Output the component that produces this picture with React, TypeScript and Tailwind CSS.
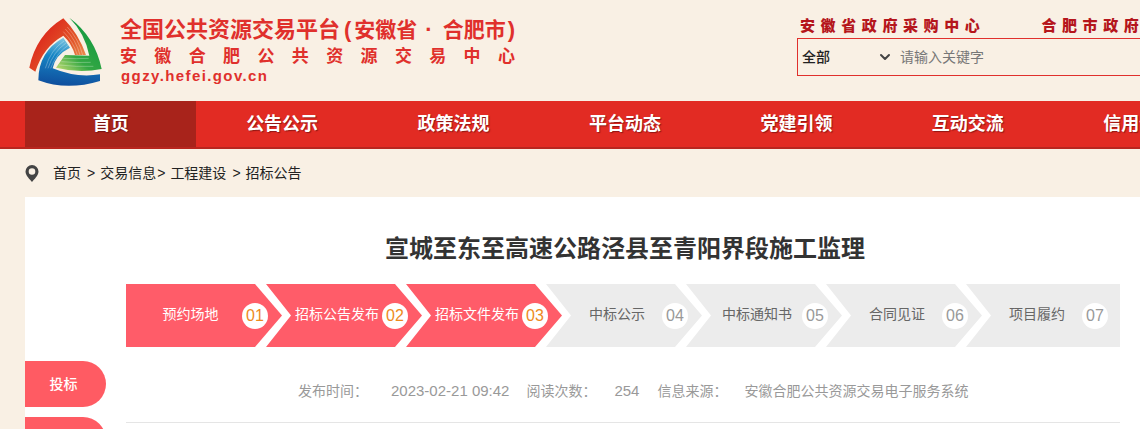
import { ChevronDown } from 'lucide-react'

const NAV = ['首页', '公告公示', '政策法规', '平台动态', '党建引领', '互动交流', '信用信息']

const STEPS = [
  { label: '预约场地', no: '01', done: true },
  { label: '招标公告发布', no: '02', done: true },
  { label: '招标文件发布', no: '03', done: true },
  { label: '中标公示', no: '04', done: false },
  { label: '中标通知书', no: '05', done: false },
  { label: '合同见证', no: '06', done: false },
  { label: '项目履约', no: '07', done: false },
]

function Logo() {
  return (
    <svg width="90" height="85" viewBox="0 0 270 255" className="shrink-0">
      <defs>
        <linearGradient id="redOrange" x1="0.2" y1="0.3" x2="1" y2="0.9">
          <stop offset="0" stopColor="#dd2a1c" />
          <stop offset="0.55" stopColor="#e2592a" />
          <stop offset="1" stopColor="#eda15c" />
        </linearGradient>
        <linearGradient id="greens" x1="0.7" y1="0.2" x2="0.1" y2="1">
          <stop offset="0" stopColor="#149a41" />
          <stop offset="0.6" stopColor="#35a843" />
          <stop offset="1" stopColor="#b4d66c" />
        </linearGradient>
        <linearGradient id="blues" x1="0.5" y1="1" x2="0.6" y2="0">
          <stop offset="0" stopColor="#0f4f9e" />
          <stop offset="0.6" stopColor="#1685c4" />
          <stop offset="1" stopColor="#86cbe3" />
        </linearGradient>
      </defs>
      <path d="M28 188 Q48 90 130 40 Q175 85 198 150 L165 150 Q155 115 130 92 Q70 125 46 200 Z" fill="url(#redOrange)" />
      <path d="M148 38 Q225 95 245 192 Q175 205 108 188 L135 150 L208 152 Q195 85 148 38 Z" fill="url(#greens)" />
      <path d="M130 98 L150 128 Q105 150 98 190 Q170 220 240 208 L240 228 Q140 258 55 226 Q55 140 130 98 Z" fill="url(#blues)" />
      {/* fine stripes on the inner ends of the three blades */}
      <g fill="none" stroke="#fff" strokeOpacity="0.55" strokeWidth="1.500">
        <path d="M136 72 Q168 105 180 150" />
        <path d="M130 80 Q160 110 172 150" />
        <path d="M142 66 Q176 102 188 150" />
        <path d="M130 160 Q170 162 206 160" />
        <path d="M124 170 Q170 174 212 172" />
        <path d="M117 180 Q170 186 220 184" />
        <path d="M132 108 Q92 134 76 190" />
        <path d="M138 114 Q100 140 84 190" />
        <path d="M144 121 Q108 146 92 190" />
      </g>
    </svg>
  )
}

function PinIcon() {
  return (
    <svg width="14" height="17" viewBox="0 0 14 17" className="shrink-0">
      <path
        fillRule="evenodd"
        d="M7 0a6.5 6.5 0 0 1 6.5 6.5C13.5 10.5 9 14.500 7 17 5 14.500 .5 10.500 .5 6.500A6.500 6.500 0 0 1 7 0zm0 3.200a3.300 3.300 0 1 0 0 6.600 3.300 3.300 0 0 0 0-6.600z"
        fill="#444"
      />
    </svg>
  )
}

export default function App() {
  return (
    <div className="h-[429px] w-[1140px] overflow-hidden bg-[#f9f0e4] font-['Liberation_Sans','Noto_Sans_CJK_SC',sans-serif]">
      <header className="flex h-[101px] w-[1250px] pl-[20px]">
        <div className="mt-[5px] h-[85px]">
          <Logo />
        </div>
        <div className="ml-[10px] w-[395px] pt-[15px] text-[#e0302c]">
          <div className="flex items-center whitespace-nowrap text-[22px] font-bold leading-[30px]">
            <span>全国公共资源交易平台</span>
            <span className="ml-[4px]">(</span>
            <span className="ml-[3px] text-[21px]">安徽省</span>
            <span className="ml-[8px]">·</span>
            <span className="ml-[10px] text-[21px]">合肥市</span>
            <span className="ml-[2px]">)</span>
          </div>
          <div className="flex justify-between text-[17px] font-bold leading-[24px]">
            {'安徽合肥公共资源交易中心'.split('').map((c, i) => (
              <span key={i}>{c}</span>
            ))}
          </div>
          <div className="-mt-[3px] pl-[1px] text-[15px] font-bold leading-[20px] tracking-[1.4px]">ggzy.hefei.gov.cn</div>
        </div>
        <div className="ml-[282px] w-[440px] pt-[14px]">
          <div className="flex h-[24px] items-center whitespace-nowrap pl-[3px] text-[15px] font-black leading-[22px] tracking-[5.6px] text-[#b5161c]">
            <span>安徽省政府采购中心</span>
            <span className="ml-[56px]">合肥市政府采购中心</span>
          </div>
          <div className="flex h-[38px] items-center border border-[#e0302c] pl-1">
            <span className="w-[75px] text-sm font-medium text-[#222]">全部</span>
            <ChevronDown className="h-4 w-4 text-[#444]" strokeWidth={3} />
            <input
              placeholder="请输入关键字"
              className="ml-[7px] flex-1 bg-transparent text-sm outline-none placeholder:text-[#777]"
            />
          </div>
        </div>
      </header>

      <nav className="h-[48px] w-[1250px] border-b-2 border-[#b8261f] bg-[#e22b23] pl-[25px]">
        <ul className="flex h-full w-[1200px]">
          {NAV.map((item, i) => (
            <li
              key={item}
              className={`flex flex-1 items-center justify-center text-lg font-bold text-white [text-shadow:1px_1px_1px_rgba(90,10,10,0.6)] ${i === 0 ? 'bg-[#a8231b]' : ''}`}
            >
              {item}
            </li>
          ))}
        </ul>
      </nav>

      <div className="flex h-[48px] items-center pl-[25px] text-sm text-[#222]">
        <PinIcon />
        <span className="ml-[14px]">首页</span>
        <span className="ml-[6px]">&gt;</span>
        <span className="ml-[5px]">交易信息</span>
        <span className="ml-[1px]">&gt;</span>
        <span className="ml-[5px]">工程建设</span>
        <span className="ml-[6px]">&gt;</span>
        <span className="ml-[5px]">招标公告</span>
      </div>

      <main className="ml-[25px] h-[300px] w-[1200px] bg-white">
        <h1 className="pt-[35px] text-center text-2xl font-bold leading-[34px] text-[#333]">
          宣城至东至高速公路泾县至青阳界段施工监理
        </h1>

        <div className="mt-[18px] flex">
          <aside className="w-[101px] shrink-0 pt-[77px]">
            <div className="flex h-[46px] w-[81px] items-center justify-center rounded-r-[23px] bg-[#ff5b63] pr-[4px] text-sm font-medium text-white">投标</div>
            <div className="mt-[10px] h-[46px] w-[81px] rounded-r-[23px] bg-[#ff5b63]" />
          </aside>

          <div className="w-[994px] shrink-0">
            <ol className="flex h-[63px]">
              {STEPS.map((s, i) => (
                <li
                  key={s.no}
                  className={`flex shrink-0 items-center text-sm ${s.done ? 'bg-[#ff5c69] text-white' : 'bg-[#ececec] text-[#666]'} ${
                    i === 0
                      ? 'w-[156px] [clip-path:polygon(0_0,129px_0,100%_50%,129px_100%,0_100%)]'
                      : i === STEPS.length - 1
                        ? '-ml-4 w-[154px] [clip-path:polygon(0_0,100%_0,100%_100%,0_100%,25px_50%)]'
                        : '-ml-4 w-[156px] [clip-path:polygon(0_0,129px_0,100%_50%,129px_100%,0_100%,25px_50%)]'
                  }`}
                >
                  <span className={`-mt-[3px] w-[116px] whitespace-nowrap text-center ${i === 0 ? 'pl-[13px]' : 'pl-[26px]'}`}>{s.label}</span>
                  <span className={`flex h-[26px] w-[26px] items-center justify-center rounded-full bg-white text-base ${s.done ? 'text-[#ee8a1d]' : 'text-[#999]'}`}>
                    {s.no}
                  </span>
                </li>
              ))}
            </ol>

            <div className="flex h-[76px] items-center whitespace-nowrap border-b border-[#e5e5e5] pl-[172px] pt-[13px] text-sm text-[#999]">
              <span>发布时间：</span>
              <span className="ml-[23px] text-[15px]">2023-02-21 09:42</span>
              <span className="ml-[17px]">阅读次数：</span>
              <span className="ml-[18px] text-[15px]">254</span>
              <span className="ml-[18px]">信息来源：</span>
              <span className="ml-[17px]">安徽合肥公共资源交易电子服务系统</span>
            </div>
          </div>
        </div>
      </main>
    </div>
  )
}
